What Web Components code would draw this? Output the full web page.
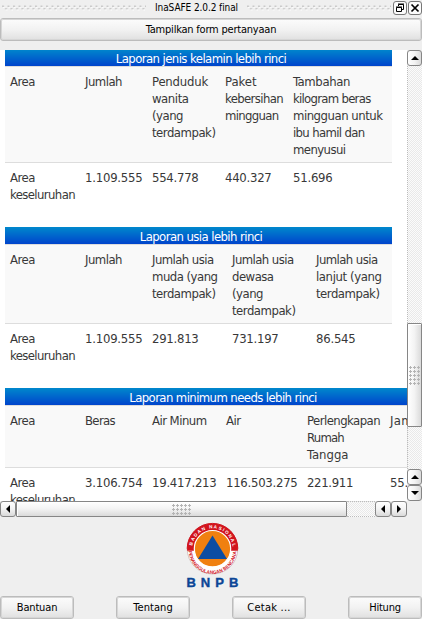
<!DOCTYPE html>
<html lang="id"><head><meta charset="utf-8"><title>InaSAFE 2.0.2 final</title>
<style>
html,body{margin:0;height:100%;overflow:hidden;background:#efefef}
body{font-family:"DejaVu Sans Condensed","DejaVu Sans",sans-serif;font-stretch:condensed;color:#383838}
</style></head><body>
<dock-panel></dock-panel>
<script>
const define=(name,html,after)=>{
  const t=document.createElement('template');t.innerHTML=html;
  customElements.define(name,class extends HTMLElement{
    constructor(){super();this.attachShadow({mode:'open'}).append(t.content.cloneNode(true));}
    connectedCallback(){if(after)after(this,this.shadowRoot);}
  });
};

// A single line of text tracked to a given advance width.
define('text-line','<style>:host{display:block;white-space:pre;width:max-content}span{display:inline-block}</style><span></span>',(h,r)=>{
  const s=r.querySelector('span');s.textContent=h.getAttribute('text');
  const w=parseFloat(h.getAttribute('w')),n=s.textContent.length;
  const natural=s.getBoundingClientRect().width;
  s.style.letterSpacing=((w-natural)/n)+'px';
});

define('push-button',`<style>
:host{display:flex;box-sizing:border-box;height:23px;width:74px;align-items:center;justify-content:center;border:1px solid #bcbcbc;outline:1px solid #d6d6d6;outline-offset:-2px;border-radius:3px;background:linear-gradient(#fcfcfc,#f2f2f2 50%,#e0e0e0);font-size:11px;line-height:15px;color:#000}
</style><slot></slot>`);

define('title-bar',`<style>
:host{display:flex;height:18px;box-sizing:border-box;align-items:center;font-size:10px;line-height:14px;color:#000;padding:0 0 3px 2px}
svg{display:block}
.a{margin-right:9px}.b{margin-left:9px}
.btn{border-radius:3px;border:1px solid #777;background:#fbfbfb;box-sizing:border-box;width:14px;height:14px}
.btn+.btn{margin-left:1px}
.sp{flex:1}
</style>
<svg class="a" width="144" height="6"><defs><pattern id="g" width="5.5" height="6" patternUnits="userSpaceOnUse"><path d="M0 .5h2v1.5h-2zM3 3h2v1.5h-2z" fill="#c9c9c9"/><path d="M1 2h1.5v.8h-1.5zM4 4.6h1.5v.8h-1.5z" fill="#fff"/></pattern></defs><rect width="144" height="6" fill="url(#g)"/></svg>
<text-line w="83" text="InaSAFE 2.0.2 final"></text-line>
<svg class="b" width="144" height="6"><rect width="144" height="6" fill="url(#g)"/></svg>
<div class="sp"></div>
<div class="btn"><svg width="12" height="12"><path d="M4.5 4V2.5H9.5V7.5H8M4 2h6" fill="none" stroke="#000"/><path d="M2.5 5.5H7.5V9.5H2.5ZM2 5h6" fill="none" stroke="#000"/></svg></div>
<div class="btn"><svg width="12" height="12"><path d="M2.5 2.5L9.5 9.5M9.5 2.5L2.5 9.5" stroke="#000" stroke-width="1.7"/></svg></div>`);

define('report-table',`<style>
:host{display:block;width:var(--w,387px);margin-bottom:20px;font-size:13px;line-height:17px}
.cap{height:17px;box-sizing:border-box;padding:1px 0 0 5px;display:flex;justify-content:center;color:#fff;background:linear-gradient(#08c,#04c)}
.row{display:grid;border-top:1px solid #ddd}
.row>div{padding:6px 5px 4px}
.head{background:#f9f9f9}
</style><div class="cap"></div><div class="row head"></div><div class="row body"></div>`,(h,r)=>{
  const d=reports[h.getAttribute('report')];
  h.style.setProperty('--w',d.cols.reduce((a,b)=>a+b,0)+'px');
  const add=(p,l)=>{const e=document.createElement('text-line');e.setAttribute('text',l[0]);e.setAttribute('w',l[1]);p.append(e);};
  add(r.querySelector('.cap'),d.caption);
  for(const k of ['head','body']){const row=r.querySelector('.'+k);row.style.gridTemplateColumns=d.cols.map(c=>c+'px').join(' ');
    for(const c of d[k]){const cell=document.createElement('div');row.append(cell);c.forEach(l=>add(cell,l));}}
});
const area=[['Area',25]],whole=[['Area',25],['keseluruhan',65]],ju=['Jumlah usia',61.5],td=['terdampak)',63.5];
const reports={
 gender:{caption:['Laporan jenis kelamin lebih rinci',170.5],cols:[75,67,73,68,104],
  head:[area,[['Jumlah',37]],[['Penduduk',56],['wanita',36.5],['(yang',31],td],[['Paket',31.5],['kebersihan',58],['mingguan',53.5]],[['Tambahan',57],['kilogram beras',77.5],['mingguan untuk',89.5],['ibu hamil dan',71.5],['menyusui',52.5]]],
  body:[whole,[['1.109.555',57.5]],[['554.778',46.5]],[['440.327',46.5]],[['51.696',39.5]]]},
 age:{caption:['Laporan usia lebih rinci',122.5],cols:[75,67,80,84,81],
  head:[area,[['Jumlah',37]],[ju,['muda (yang',65.5],td],[ju,['dewasa',41.5],['(yang',31],td],[ju,['lanjut (yang',65.5],td]],
  body:[whole,[['1.109.555',57.5]],[['291.813',46.5]],[['731.197',46.5]],[['86.545',39.5]]]},
 needs:{caption:['Laporan minimum needs lebih rinci',187.5],cols:[75,67,74,81,83,51],
  head:[area,[['Beras',30]],[['Air Minum',54.5]],[['Air',14.5]],[['Perlengkapan',73],['Rumah',37],['Tangga',41.5]],[['Jamban',46]]],
  body:[whole,[['3.106.754',57.5]],[['19.417.213',64.5]],[['116.503.275',71.5]],[['221.911',46]],[['55.478',39.5]]]}
};

const barStyle=`
.track{background:repeating-conic-gradient(#e9e9e9 0 25%,#fbfbfb 0 50%) 0 0/2px 2px}
.b,.thumb{box-sizing:border-box;border:1px solid #868686;border-radius:3px;display:grid;place-items:center}
.thumb{border-radius:1px;box-shadow:inset 1px 1px #fff}
.dots{background:radial-gradient(circle at 1.5px 1.5px,#b4b4b4 0 1px,transparent 1.1px) 0 0/4px 4px}
svg{display:block}`;
define('v-scroll',`<style>${barStyle}
:host{display:flex;flex-direction:column;width:15px}
.b,.thumb{background:linear-gradient(90deg,#fff,#f3f3f3 50%,#dadada)}
.b{height:16px}.track{border-left:1px dotted #bbb;flex:none}
.t1{height:257px}.thumb{height:104px}.t2{height:42px}.dots{width:11px;height:19px}
</style><div class="b"><svg width="8" height="4"><path d="M4 0L8 4H0Z"/></svg></div><div class="track t1"></div><div class="thumb"><div class="dots"></div></div><div class="track t2"></div>
<div class="b"><svg width="8" height="4"><path d="M4 0L8 4H0Z"/></svg></div><div class="b"><svg width="8" height="4"><path d="M4 4L0 0H8Z"/></svg></div>`);
define('h-scroll',`<style>${barStyle}
:host{display:flex;height:16px;width:407px}
.b,.thumb{background:linear-gradient(#fff,#f3f3f3 50%,#dadada)}
.b{width:16px}.thumb{width:331px}.track{flex:1;border:dotted #bbb;border-width:1px 0;box-sizing:border-box}.dots{width:19px;height:11px}
</style><div class="b"><svg width="4" height="8"><path d="M0 4L4 0V8Z"/></svg></div><div class="thumb"><div class="dots"></div></div><div class="track"></div>
<div class="b"><svg width="4" height="8"><path d="M0 4L4 0V8Z"/></svg></div><div class="b"><svg width="4" height="8"><path d="M4 4L0 0V8Z"/></svg></div>`);

define('bnpb-logo',`<style>:host{display:block;width:58px;height:70px;font-stretch:normal}svg{display:block}text{font-family:"Liberation Sans",sans-serif;font-weight:bold}</style>
<svg width="58" height="70" viewBox="0 0 58 70">
<circle cx="28.5" cy="28.7" r="25.3" fill="#fff" stroke="#c9a9a9" stroke-width=".7"/>
<path d="M3.2 30.5A25.37 25.37 0 0 1 53.8 30.5Z" fill="#d2141e"/>
<circle cx="28.5" cy="28.7" r="25.3" fill="none" stroke="#d2141e" stroke-width="1" pathLength="100" stroke-dasharray="50 50" stroke-dashoffset="50"/>
<path d="M3.2 28.7A25.3 25.3 0 0 1 53.8 28.7V30.5H3.2Z" fill="#d2141e"/>
<circle cx="28.5" cy="28.7" r="18.2" fill="#f08010" stroke="#fff" stroke-width="1.2"/>
<path d="M28.5 15.5L43 39H14Z" fill="#0c4da2"/>
<path id="u" d="M8.2 28.7A20.3 20.3 0 0 1 48.8 28.7" fill="none"/><path id="l" d="M4.6 30A23.9 23.9 0 0 0 52.4 30" fill="none"/>
<text font-size="4.6" fill="#fff"><textPath href="#u" startOffset="3" textLength="58">BADAN NASIONAL</textPath></text>
<text font-size="4.8" fill="#d2141e"><textPath href="#l" startOffset="1" textLength="72" lengthAdjust="spacingAndGlyphs">PENANGGULANGAN BENCANA</textPath></text>
<text x="2.4" y="66.8" font-size="13" fill="#0c4696" stroke="#0c4696" stroke-width=".4" textLength="52">BNPB</text>
</svg>`);

define('dock-panel',`<style>
:host{display:flex;flex-direction:column;width:422px;height:619px;background:#efefef}
push-button.wide{width:100%}
.view{display:grid;grid-template-columns:407px 15px;grid-template-rows:451px 16px;margin-top:9px;height:467px}
.page{background:#fff;overflow:hidden;padding-left:5px}
.page report-table:first-child{margin-top:-1px}
.logo{display:flex;height:79px;padding:3px 0 0 184px;box-sizing:border-box}
.foot{display:flex;justify-content:space-between}
</style>
<title-bar></title-bar>
<push-button class="wide"><text-line w="130.5" text="Tampilkan form pertanyaan"></text-line></push-button>
<div class="view"><div class="page"><report-table report="gender"></report-table><report-table report="age"></report-table><report-table report="needs"></report-table></div><v-scroll></v-scroll><h-scroll></h-scroll></div>
<div class="logo"><bnpb-logo></bnpb-logo></div>
<div class="foot"><push-button><text-line w="40.5" text="Bantuan"></text-line></push-button><push-button><text-line w="39.5" text="Tentang"></text-line></push-button><push-button><text-line w="43.5" text="Cetak ..."></text-line></push-button><push-button><text-line w="31.5" text="Hitung"></text-line></push-button></div>`);
</script></body></html>
